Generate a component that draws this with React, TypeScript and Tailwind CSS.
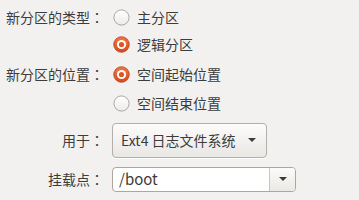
import * as React from "react";

const font = { fontFamily: '"Noto Sans CJK SC", "Noto Sans", sans-serif' };

function Radio({ checked }: { checked: boolean }) {
  return (
    <svg width="17" height="17" viewBox="0 0 17 17" className="shrink-0">
      <defs>
        <linearGradient id="off" x1="0" y1="0" x2="0" y2="1">
          <stop offset="0" stopColor="#ffffff" />
          <stop offset="1" stopColor="#ecebe9" />
        </linearGradient>
        <linearGradient id="on" x1="0" y1="0" x2="0" y2="1">
          <stop offset="0" stopColor="#f07746" />
          <stop offset="1" stopColor="#d4491c" />
        </linearGradient>
      </defs>
      {checked ? (
        <>
          <circle cx="8.5" cy="8.5" r="7.8" fill="url(#on)" stroke="#b8431a" strokeWidth="0.8" />
          <circle cx="8.5" cy="8.5" r="4.6" fill="#ffffff" />
          <circle cx="8.5" cy="8.5" r="2.6" fill="#dd5525" />
        </>
      ) : (
        <circle cx="8.5" cy="8.5" r="7.6" fill="url(#off)" stroke="#a19d98" strokeWidth="0.9" />
      )}
    </svg>
  );
}

function Arrow() {
  return (
    <svg width="10" height="6" viewBox="0 0 10 6">
      <path d="M1 1 L9 1 L5 5 Z" fill="#3c3c3c" />
    </svg>
  );
}

// full-width colon, centred in its cell as GTK draws it here
function Label({ text }: { text: string }) {
  return (
    <>
      {text}
      <span className="inline-block w-[14px] text-center font-['Noto_Sans_CJK_TC']">：</span>
    </>
  );
}

export default function App() {
  return (
    <div className="w-[359px] h-[200px] bg-[#f2f1f0] text-[#3c3c3c] text-[14px] overflow-hidden" style={font}>
      <div className="grid grid-cols-[104px_1fr] gap-x-[9px] pt-[4px]">
        <div className="h-[26px] flex items-center justify-end"><Label text="新分区的类型" /></div>
        <div className="h-[26px] flex items-center gap-[7px]">
          <Radio checked={false} />
          <span>主分区</span>
        </div>

        <div className="h-[28px]" />
        <div className="h-[28px] flex items-center gap-[7px]">
          <Radio checked={true} />
          <span>逻辑分区</span>
        </div>

        <div className="h-[32px] flex items-center justify-end"><Label text="新分区的位置" /></div>
        <div className="h-[32px] flex items-center gap-[7px]">
          <Radio checked={true} />
          <span>空间起始位置</span>
        </div>

        <div className="h-[26px]" />
        <div className="h-[26px] flex items-center gap-[7px]">
          <Radio checked={false} />
          <span>空间结束位置</span>
        </div>

        <div className="h-[36px] mt-[6px] flex items-center justify-end"><Label text="用于" /></div>
        <div className="h-[36px] mt-[6px] flex items-center">
          <div className="ml-[-1px] w-[155px] h-[35px] rounded-[4px] border border-[#b3afa9] bg-gradient-to-b from-[#fcfcfb] to-[#e9e7e4] shadow-[0_1px_0_#ffffff] flex items-center pl-[8px] pr-[9px]">
            <span className="flex-1">Ext4 日志文件系统</span>
            <Arrow />
          </div>
        </div>

        <div className="h-[26px] mt-[8px] flex items-center justify-end"><Label text="挂载点" /></div>
        <div className="h-[26px] mt-[8px] flex items-center">
          <div className="ml-[-1px] w-[184px] h-[25px] rounded-[4px] border border-[#aaa6a0] bg-white flex overflow-hidden">
            <div className="flex-1 flex items-center pl-[6px] text-[15px]">/boot</div>
            <div className="w-[26px] border-l border-[#c9c6c2] bg-gradient-to-b from-[#fbfbfa] to-[#ebe9e6] flex items-center justify-center">
              <Arrow />
            </div>
          </div>
        </div>
      </div>
    </div>
  );
}
